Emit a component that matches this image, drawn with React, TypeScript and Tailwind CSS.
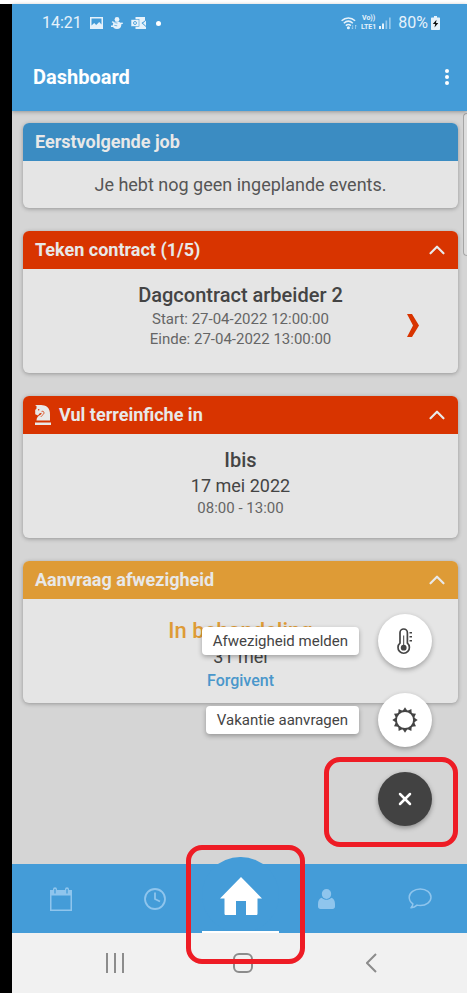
import React from 'react';
import { ChevronUp, X } from 'lucide-react';

type IconProps = { className?: string };

const PictureIcon = ({ className }: IconProps) => (
  <svg viewBox="0 0 13 12" className={className} aria-hidden="true">
    <path fillRule="evenodd" fill="currentColor" d="M0 0h13v12H0zM1.500 1.500v7L4.200 6l2 2 3-3 2.300 2.500v-6z" />
  </svg>
);

const SnowmanIcon = ({ className }: IconProps) => (
  <svg viewBox="0 0 12 12" className={className} aria-hidden="true" fill="currentColor">
    <circle cx="6" cy="2.400" r="2.400" />
    <ellipse cx="6" cy="8.300" rx="4.200" ry="3.700" />
    <path d="M1 4.200l3 .8-.6 1.200L.8 5.600zM8 6l3.500-.5.5 1.200-2.500 1zM0 8.500h2.500v1.500H0z" />
    <path d="M3.500 5.600l3 .5M3.400 8.400l2.800.4" stroke="#449cd8" strokeWidth="0.700" />
  </svg>
);

const MailIcon = ({ className }: IconProps) => (
  <svg viewBox="0 0 15 12" className={className} aria-hidden="true">
    <path fill="currentColor" d="M4.500 0H14v3.500L10.500 6l4.500 4v2H4.500z" />
    <path fill="currentColor" d="M15 3.500V9l-3-2.800z" />
    <rect x="0" y="2.500" width="8" height="7" fill="currentColor" stroke="#449cd8" strokeWidth="0.600" />
    <circle cx="4" cy="6" r="1.500" fill="none" stroke="#449cd8" strokeWidth="0.900" />
  </svg>
);

const WifiIcon = ({ className }: IconProps) => (
  <svg viewBox="0 0 17 13" className={className} aria-hidden="true" fill="none" stroke="currentColor" strokeWidth="1.500">
    <path d="M.6 3.700c4-3.600 9.500-3.600 13.500 0M2.800 6.200c2.800-2.500 6.300-2.500 9 0M4.800 8.600c1.600-1.400 3.600-1.400 5.100 0" />
    <circle cx="7.400" cy="10.700" r="0.800" fill="currentColor" />
    <path d="M11.700 8v4M10.500 10.700l1.200 1.300M14.500 12V8M15.700 9.300L14.500 8" strokeWidth="0.800" opacity="0.600" />
  </svg>
);

const SignalIcon = ({ className }: IconProps) => (
  <svg viewBox="0 0 12 12" className={className} aria-hidden="true" fill="currentColor">
    <path d="M0 9h2v3H0zM3 6.500h2V12H3z" />
    <path d="M6.500 3.500h1.700V12H6.500zM10 .5h1.700V12H10z" opacity="0.500" />
  </svg>
);

const BatteryIcon = ({ className }: IconProps) => (
  <svg viewBox="0 0 9 14" className={className} aria-hidden="true">
    <path fill="currentColor" d="M3 0h3v1.500h2c.6 0 1 .4 1 1V13c0 .6-.4 1-1 1H1c-.6 0-1-.4-1-1V2.500c0-.6.4-1 1-1h2z" />
    <path fill="#111" d="M5.500 3.800L1.800 8h2.400l-.7 3.500L7.300 7H5z" />
  </svg>
);

const KnightIcon = ({ className }: IconProps) => (
  <svg viewBox="0 0 16 20" className={className} aria-hidden="true">
    <path fill="currentColor" d="M1.500 1L0 .2C4-.3 9-.3 12 1.800c2.600 2 3 5 3 8.200v5.500H1.500c0-3 1.600-4.600 4-5.800.7-.4 1.100-1 1.100-2L4.500 8.600 3 10.500.2 9.300V5l1.300-1.600z" />
    <circle cx="3.700" cy="4.700" r="0.700" fill="#d83400" />
    <path d="M6.600 6.400c2-.6 2.600.8 2.300 2-.5 1.500-2.200 2-3 3.400" fill="none" stroke="#d83400" strokeWidth="0.800" />
    <path fill="currentColor" d="M0 17.500h16V20H0z" />
  </svg>
);

const AngleRightIcon = ({ className }: IconProps) => (
  <svg viewBox="0 0 12 23" className={className} aria-hidden="true">
    <path fill="currentColor" d="M0 0h5l7 11.500L5 23H0l6-11.500z" />
  </svg>
);

const ThermometerIcon = ({ className }: IconProps) => (
  <svg viewBox="0 0 16 27" className={className} aria-hidden="true" fill="none" stroke="currentColor">
    <path d="M3 15.200V4.700a3.700 3.700 0 0 1 7.400 0v10.500a5.700 5.700 0 1 1-7.400 0z" strokeWidth="1.700" />
    <path d="M6.700 7.500v11" strokeWidth="1" />
    <circle cx="6.700" cy="19.700" r="2.900" fill="currentColor" stroke="none" />
    <path d="M12.500 4.700h2.500M12.500 8.700h2.500M12.500 12.700h2.500" strokeWidth="1.600" />
  </svg>
);

// twelve small triangular rays around the disc
const SunIcon = ({ className }: IconProps) => (
  <svg viewBox="-13 -13 26 26" className={className} aria-hidden="true" fill="currentColor">
    <circle r="9" fill="none" stroke="currentColor" strokeWidth="1.800" />
    {[0, 30, 60, 90, 120, 150, 180, 210, 240, 270, 300, 330].map((deg) => (
      <path key={deg} d="M-2.500-9L0-12.700 2.500-9z" transform={`rotate(${deg})`} />
    ))}
  </svg>
);

const CalendarIcon = ({ className }: IconProps) => (
  <svg viewBox="0 0 22 24" className={className} aria-hidden="true">
    <path fill="currentColor" fillRule="evenodd" d="M0 3h3V2.200a2 2 0 0 1 4 0V3h8v-.8a2 2 0 0 1 4 0V3h3v21H0zM1.500 8.500v14h19v-14z" />
    <path d="M5 2v4.500M17 2v4.500" stroke="#449cd8" strokeWidth="1.300" />
  </svg>
);

const ClockIcon = ({ className }: IconProps) => (
  <svg viewBox="0 0 22 22" className={className} aria-hidden="true" fill="none" stroke="currentColor" strokeWidth="1.800">
    <circle cx="11" cy="11" r="10" />
    <path d="M11 4.500V11l5 2.500" />
  </svg>
);

const HomeIcon = ({ className }: IconProps) => (
  <svg viewBox="0 0 42 38" className={className} aria-hidden="true">
    <path fill="currentColor" d="M21 0l21 21.500h-4.500V36.500c0 1-.5 1.500-1.500 1.500H26V24H16v14H6c-1 0-1.500-.5-1.500-1.500v-15H0z" />
  </svg>
);

const PersonIcon = ({ className }: IconProps) => (
  <svg viewBox="0 0 17 20" className={className} aria-hidden="true" fill="currentColor">
    <ellipse cx="8.500" cy="5" rx="4.700" ry="5" />
    <path d="M3.800 8.700c2.600 2.700 6.800 2.700 9.400 0 2.600.6 3.800 3 3.800 6.300v2.500c0 1.500-1 2.500-2.500 2.500h-12C1 20 0 19 0 17.500V15c0-3.300 1.200-5.700 3.800-6.300z" />
  </svg>
);

const ChatIcon = ({ className }: IconProps) => (
  <svg viewBox="0 0 24 21" className={className} aria-hidden="true" fill="none" stroke="currentColor" strokeWidth="1.500" strokeLinejoin="round">
    <path d="M12.300 1c6 0 10.700 3.600 10.700 8.200s-4.700 8.300-10.700 8.300c-1.200 0-2.300-.1-3.300-.4-1.600 1.500-3.600 2.400-6 2.700 1.100-1.100 1.700-2.400 1.900-4C2.600 14.300 1.200 12 1.200 9.200 1.200 4.600 6.300 1 12.300 1z" />
  </svg>
);

type CardProps = {
  title: string;
  headerClass: string;
  icon?: React.ReactNode;
  collapsible?: boolean;
  children: React.ReactNode;
};

const Card: React.FC<CardProps> = ({ title, headerClass, icon, collapsible = true, children }) => (
  <section className="overflow-hidden rounded-md bg-[#e5e5e5] shadow-[0_1px_4px_rgba(0,0,0,0.3)]">
    <header className={`flex h-[38px] items-center gap-2 px-3 text-[#e8e8e8] ${headerClass}`}>
      {icon}
      <h2 className="flex-1 text-lg font-bold">{title}</h2>
      {collapsible && (
        <button type="button" aria-label={`${title} inklappen`} className="-mr-1">
          <ChevronUp className="size-[26px]" strokeWidth={2} />
        </button>
      )}
    </header>
    {children}
  </section>
);

const actions = [
  { label: 'Afwezigheid melden', icon: <ThermometerIcon className="h-[27px] w-4" /> },
  { label: 'Vakantie aanvragen', icon: <SunIcon className="size-[26px]" /> },
];

const App: React.FC = () => {
  return (
    <div className="flex min-h-screen flex-col bg-white pt-1 font-['Roboto',sans-serif] text-[#444]">
      <div className="flex flex-1 flex-col border-l-12 border-black">
        {/* Status bar + app bar */}
        <div className="relative z-10 bg-[#449cd8] text-white shadow-[0_1px_4px_rgba(0,0,0,0.3)]">
          <div className="flex h-[38px] items-center justify-between pr-[27px] pl-[30px] text-[#e6f2fb]">
            <div className="flex items-center gap-2">
              <span className="text-base">14:21</span>
              <PictureIcon className="h-3 w-[13px]" />
              <SnowmanIcon className="size-3" />
              <MailIcon className="h-3 w-[15px]" />
              <span className="ml-0.5 size-[5px] rounded-full bg-white" />
            </div>
            <div className="flex items-center gap-[3px]">
              <WifiIcon className="h-[13px] w-[17px]" />
              <span className="flex flex-col text-center text-[7px] leading-[9px] font-bold">
                <span>Vo))</span>
                <span>LTE1</span>
              </span>
              <SignalIcon className="size-3" />
              <span className="ml-1 text-base">80%</span>
              <BatteryIcon className="h-3.5 w-[9px]" />
            </div>
          </div>
          <div className="flex h-[69px] items-center justify-between pr-4 pl-[21px]">
            <h1 className="text-xl font-bold">Dashboard</h1>
            <button type="button" aria-label="Meer opties" className="flex flex-col gap-[2px] px-0.5">
              <span className="size-1 rounded-full bg-white" />
              <span className="size-1 rounded-full bg-white" />
              <span className="size-1 rounded-full bg-white" />
            </button>
          </div>
        </div>

        <main className="relative flex-1 bg-[#d5d5d5] pt-3 pr-[9px] pl-[11px]">
          {/* Edge panel handle */}
          <div className="absolute top-0.5 right-0 h-[143px] w-1 rounded-l-sm border border-r-0 border-[#a5a5a5] bg-[#dedede]" />

          <div className="flex flex-col gap-[23px]">
            <Card title="Eerstvolgende job" headerClass="bg-[#3b8cc2]" collapsible={false}>
              <p className="pt-3 pb-[11px] text-center text-lg leading-6 text-[#555]">Je hebt nog geen ingeplande events.</p>
            </Card>

            <Card title="Teken contract (1/5)" headerClass="bg-[#d83400]">
              <div className="relative min-h-[104px] pt-3 text-center">
                <h3 className="text-xl leading-7 font-medium">Dagcontract arbeider 2</h3>
                <p className="text-[15px] leading-5 text-[#666]">Start: 27-04-2022 12:00:00</p>
                <p className="text-[15px] leading-5 text-[#666]">Einde: 27-04-2022 13:00:00</p>
                <button type="button" aria-label="Contract openen" className="absolute inset-y-0 right-[39px] pt-2 text-[#d83400]">
                  <AngleRightIcon className="h-[23px] w-3" />
                </button>
              </div>
            </Card>

            <Card title="Vul terreinfiche in" headerClass="bg-[#d83400]" icon={<KnightIcon className="h-5 w-4" />}>
              <div className="min-h-[104px] pt-3 text-center">
                <h3 className="text-xl leading-7 font-medium">Ibis</h3>
                <p className="text-lg leading-6">17 mei 2022</p>
                <p className="text-[15px] leading-5 text-[#666]">08:00 - 13:00</p>
              </div>
            </Card>

            <Card title="Aanvraag afwezigheid" headerClass="bg-[#de9b36]">
              <div className="min-h-[104px] pt-[18px] text-center">
                <h3 className="text-[22px] leading-7 font-medium text-[#de9b36]">In behandeling</h3>
                <p className="text-lg leading-6">31 mei</p>
                <p className="text-base leading-6 font-medium text-[#4a97cb]">Forgivent</p>
              </div>
            </Card>
          </div>

          {/* Floating actions */}
          <div className="absolute right-[35px] bottom-[38px] z-10 flex flex-col items-end gap-[25px]">
            {actions.map((action) => (
              <button key={action.label} type="button" className="flex items-center gap-[19px]">
                <span className="rounded bg-white px-[11px] text-[15px] leading-7 shadow-[0_2px_5px_rgba(0,0,0,0.3)]">
                  {action.label}
                </span>
                <span className="flex size-[54px] items-center justify-center rounded-full bg-white shadow-[0_2px_5px_rgba(0,0,0,0.3)]">
                  {action.icon}
                </span>
              </button>
            ))}
            <div className="relative">
              <button
                type="button"
                aria-label="Sluiten"
                className="flex size-[54px] items-center justify-center rounded-full bg-[#424242] text-white shadow-[0_2px_5px_rgba(0,0,0,0.35)]"
              >
                <X className="size-5" strokeWidth={3} />
              </button>
              <div className="pointer-events-none absolute -top-[15px] -right-[26px] h-[90px] w-[134px] rounded-2xl border-5 border-[#ee1c25]" />
            </div>
          </div>
        </main>

        {/* Tab bar */}
        <nav className="relative z-10 flex h-[69px] bg-[#449cd8] pl-0.5 text-[#8fc5ed]">
          <button type="button" aria-label="Kalender" className="flex flex-1 items-center justify-center">
            <CalendarIcon className="h-6 w-[22px]" />
          </button>
          <button type="button" aria-label="Uren" className="flex flex-1 items-center justify-center">
            <ClockIcon className="size-[22px]" />
          </button>
          <div className="relative w-[77px]">
            <div className="absolute inset-x-0 -top-[7px] h-[76px] rounded-full bg-[#449cd8]" />
            <button
              type="button"
              aria-label="Home"
              className="relative flex size-full items-center justify-center border-b-2 border-white pb-1 text-white"
            >
              <HomeIcon className="h-[38px] w-[42px]" />
            </button>
            <div className="pointer-events-none absolute -top-[19px] -left-4 h-[119px] w-[119px] rounded-2xl border-5 border-[#ee1c25]" />
          </div>
          <button type="button" aria-label="Profiel" className="flex flex-1 items-center justify-center">
            <PersonIcon className="h-5 w-[17px]" />
          </button>
          <button type="button" aria-label="Berichten" className="flex flex-1 items-center justify-center">
            <ChatIcon className="h-[21px] w-6" />
          </button>
        </nav>

        {/* Android navigation */}
        <nav className="flex h-[60px] bg-[#f1f1f1] pr-8 pl-[39px] text-[#8c8c8c]">
          <button type="button" aria-label="Recente apps" className="flex flex-1 items-center justify-center">
            <svg viewBox="0 0 18 20" className="h-5 w-[18px]" stroke="currentColor" strokeWidth="2">
              <path d="M1 0v20M9 0v20M17 0v20" />
            </svg>
          </button>
          <button type="button" aria-label="Startscherm" className="flex flex-1 items-center justify-center">
            <span className="size-5 rounded-md border-2 border-[#8c8c8c]" />
          </button>
          <button type="button" aria-label="Terug" className="flex flex-1 items-center justify-center">
            <svg viewBox="0 0 11 20" className="h-5 w-[11px]" fill="none" stroke="currentColor" strokeWidth="2">
              <path d="M10 1l-9 9 9 9" />
            </svg>
          </button>
        </nav>
      </div>
    </div>
  );
};

export default App;
